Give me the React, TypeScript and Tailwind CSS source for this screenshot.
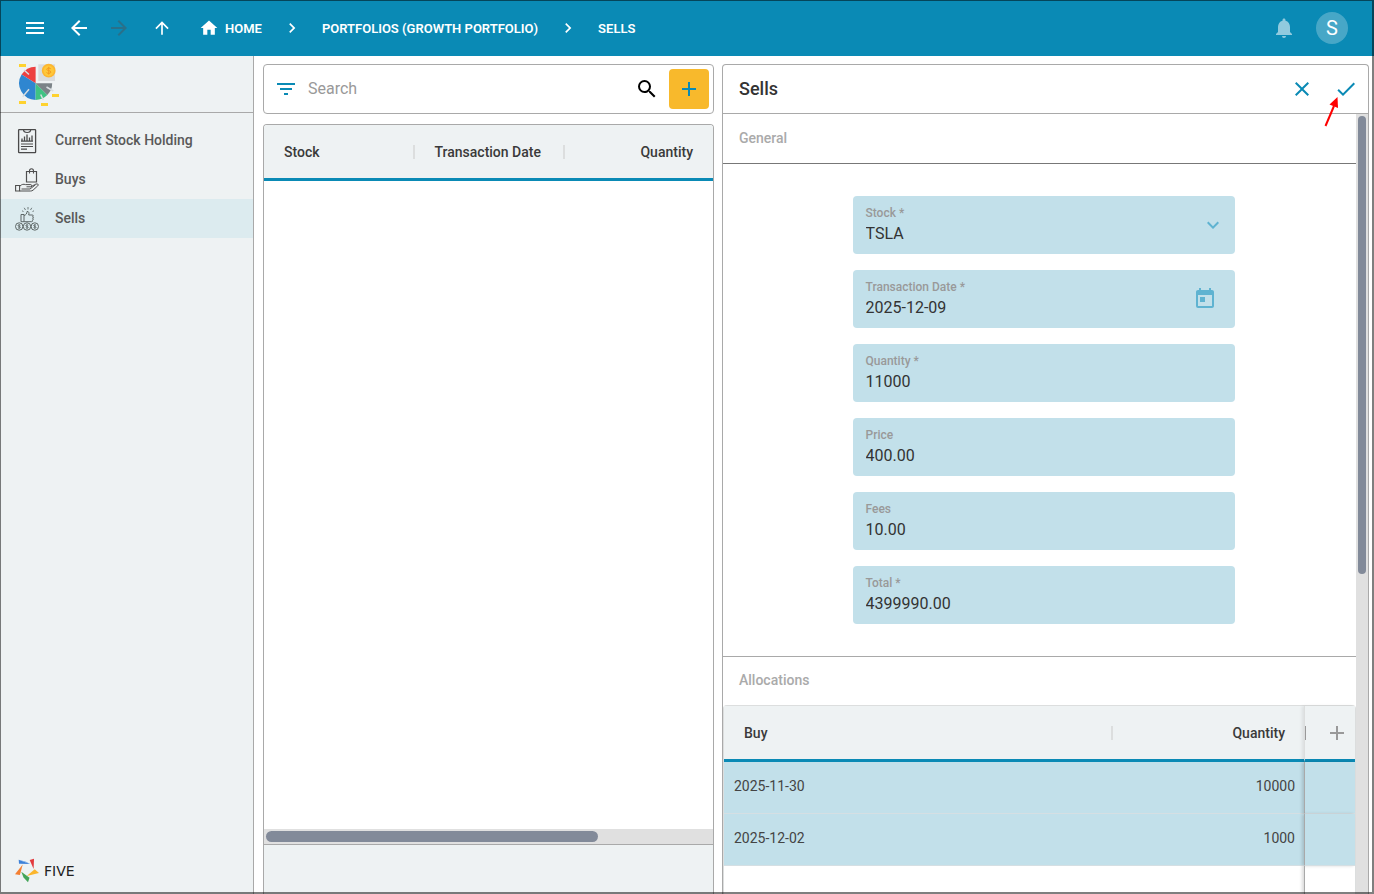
import type { ComponentType, ReactNode } from 'react';
import {
  MdAdd,
  MdArrowBack,
  MdArrowForward,
  MdArrowUpward,
  MdCheck,
  MdChevronRight,
  MdClose,
  MdExpandMore,
  MdFilterList,
  MdHome,
  MdMenu,
  MdNotifications,
  MdSearch,
  MdToday,
} from 'react-icons/md';

function PortfolioLogo() {
  return (
    <svg width="42" height="44" viewBox="0 0 42 44" aria-hidden="true">
      <path d="M20.3 1.3H37V18H20.3Z" fill="#d9dcde" />
      <path d="M17.6 20.3V3.7A16.6 16.6 0 0 0 3.6 11.6Z" fill="#ed4040" />
      <path d="M17.6 20.3L3.6 11.6A16.6 16.6 0 0 0 17.6 36.9Z" fill="#2f86d0" />
      <path d="M17.6 20.3V36.9A16.6 16.6 0 0 0 29.3 32Z" fill="#3fc383" />
      <path d="M17.6 20.3L29.3 32A16.6 16.6 0 0 0 34.2 20.3Z" fill="#7b8387" />
      <path
        d="M6 7L11 11.5M4.7 33.7L11 26.3M22.7 31.5L25.3 37M28.5 24L35.3 28"
        stroke="#d9dee1"
        strokeWidth="1.5"
        fill="none"
      />
      <path d="M1 1h7v3H1zM34 31h7v3h-7zM1 38h7v3H1zM23 40h7v3h-7z" fill="#fed22f" />
      <circle cx="30.7" cy="7.7" r="6.9" fill="#fdb62f" />
      <circle cx="30.7" cy="7.7" r="5.2" fill="#fec83a" />
      <path
        d="M32.8 5.8c-.5-.9-3.9-1.1-4.1.5-.1 1.7 4.3 1 4.2 2.8-.2 1.7-3.7 1.5-4.4.4M30.7 3.8v7.8"
        stroke="#f59a1f"
        strokeWidth="1"
        fill="none"
      />
    </svg>
  );
}

function HoldingIcon() {
  return (
    <svg width="24" height="26" viewBox="0 0 24 26" fill="none" stroke="#4a4a4a" aria-hidden="true">
      <rect x="3.6" y="1.6" width="17" height="23" rx=".6" strokeWidth="1.3" />
      <path d="M8.500 1.500c0 2.300 1.200 3 3.600 3s3.600-.7 3.600-3" strokeWidth="1.2" />
      <path d="M7 13V10.500M9.500 13V8.500M12 13V6.500M14.500 13V9.500M17 13V7.500" strokeWidth="1.3" />
      <path d="M6 13.200h12M6 16h12M6 18.500h12M6 21.200h6" strokeWidth="1.2" />
    </svg>
  );
}

function BuysIcon() {
  return (
    <svg width="24" height="26" viewBox="0 0 24 26" fill="none" stroke="#4f4f4f" aria-hidden="true">
      <path d="M11.5 4.5h10v10.5h-10z" strokeWidth="1.2" />
      <path d="M14.5 6.5V4c0-3 4-3 4 0v2.5" strokeWidth="1.1" />
      <path d="M.6 18.5h4v5.5h-4z" strokeWidth="1.1" />
      <path
        d="M4.6 19.3c2.5-2.3 4-2.3 5.8-1.7h5.5c1.3.2 1.1 2-.1 2.2h-4.3M15.8 19.8c2.5-1.3 4.8-3 6.2-2.9 1.5.2 1.6 1.200.7 2l-4.600 4.200c-.8.7-1.500.9-2.600.9H4.600M6.500 22h8.500l5.500-4.200"
        strokeWidth="1"
      />
    </svg>
  );
}

function SellsIcon() {
  return (
    <svg width="24" height="26" viewBox="0 0 24 26" fill="none" stroke="#56605f" aria-hidden="true">
      <path d="M10.500 4L9.200 1.800M13 3.500V1M15.500 4l1.300-2.200M8.500 5.500L7 4.800M17.500 5.500l1.500-.7" strokeWidth=".8" />
      <path d="M6 8.500h3v7.200H6zM9 9.500c2-.5 3-2 3-4 1.800-.5 2.300 1.500 1.700 3.500h3.500c1.500 0 1.300 1.700.3 1.800 1.300.2 1.200 1.800.1 1.900 1 .3.700 1.600-.3 1.700.7.500.3 1.300-.6 1.300H9" strokeWidth=".95" />
      <circle cx="4.2" cy="20.5" r="3.7" strokeWidth=".95" />
      <circle cx="12" cy="20.5" r="3.7" strokeWidth=".95" />
      <circle cx="19.8" cy="20.5" r="3.7" strokeWidth=".95" />
      <path
        d="M5.500 19.300c-.6-.8-2.500-.6-2.500.3 0 1 2.500.7 2.500 1.700s-2 1.100-2.600.2M4.200 18.200v4.600M13.300 19.300c-.6-.8-2.500-.6-2.500.3 0 1 2.500.7 2.500 1.700s-2 1.100-2.600.2M12 18.200v4.600M21.100 19.300c-.6-.8-2.500-.6-2.500.3 0 1 2.500.7 2.500 1.700s-2 1.100-2.600.2M19.800 18.200v4.600"
        strokeWidth=".8"
      />
    </svg>
  );
}

function FiveMark() {
  return (
    <svg width="25" height="25" viewBox="0 0 25 25" aria-hidden="true">
      <path d="M3.7 1.7L15 6L4 5.7Z" fill="#3f82d8" />
      <path d="M3.7 1.7L11 3.8L15 6Z" fill="#5c9be6" />
      <path d="M14.7 2L19 .7L18.6 11Z" fill="#e2393c" />
      <path d="M11.7 18L19.7 11.3L24 15Z" fill="#fbb62c" />
      <path d="M6.3 13.7L14.5 19.7L13 24.3L8.5 19.5Z" fill="#43a558" />
      <path d="M7.7 6.5L4.9 17L0 16.3Z" fill="#f47f31" />
    </svg>
  );
}

const navItems: { label: string; Icon: ComponentType; active?: boolean }[] = [
  { label: 'Current Stock Holding', Icon: HoldingIcon },
  { label: 'Buys', Icon: BuysIcon },
  { label: 'Sells', Icon: SellsIcon, active: true },
];

const allocations = [
  { buy: '2025-11-30', quantity: '10000' },
  { buy: '2025-12-02', quantity: '1000' },
];

function TopBar() {
  return (
    <header className="flex h-14 shrink-0 items-center justify-between bg-[#0a8ab5] pr-[26px] pl-[23px] text-white">
      <nav className="flex items-center text-[13px] font-semibold" aria-label="Breadcrumb">
        <button aria-label="Menu" className="mr-5"><MdMenu size={24} /></button>
        <button aria-label="Back" className="mr-4"><MdArrowBack size={24} /></button>
        <button aria-label="Forward" className="mr-[21px] text-[#29708a]" disabled><MdArrowForward size={24} /></button>
        <button aria-label="Up" className="mr-[27px]"><MdArrowUpward size={20} /></button>
        <a href="#home" className="flex items-center gap-[6px]"><MdHome size={20} /><span className="pt-[2px]">HOME</span></a>
        <MdChevronRight size={20} className="mx-5" />
        <a href="#portfolios" className="pt-[2px]">PORTFOLIOS (GROWTH PORTFOLIO)</a>
        <MdChevronRight size={20} className="mx-5" />
        <a href="#sells" className="pt-[2px]">SELLS</a>
      </nav>
      <div className="flex items-center gap-5">
        <button aria-label="Notifications" className="text-white/55"><MdNotifications size={24} /></button>
        <button aria-label="Account" className="flex size-8 items-center justify-center rounded-full bg-white/25 text-xl">S</button>
      </div>
    </header>
  );
}

function Sidebar() {
  return (
    <aside className="flex w-[254px] shrink-0 flex-col border-r border-[#a9a9a9] bg-[#eef2f3]">
      <div className="h-[57px] border-b border-[#a9a9a9] pt-[7px] pl-[18px]">
        <PortfolioLogo />
      </div>
      <nav className="flex-1 pt-2" aria-label="Sections">
        {navItems.map(({ label, Icon, active }) => (
          <a
            key={label}
            href="#section"
            className={`flex h-[39px] items-center gap-4 pl-[15px] text-sm font-medium text-[#595959] ${active ? 'bg-[#dcebef]' : ''}`}
          >
            <Icon />
            <span className="pb-[2px]">{label}</span>
          </a>
        ))}
      </nav>
      <div className="flex items-center gap-1 pb-[11px] pl-[15px] text-[#222]">
        <FiveMark />
        <span className="font-['DejaVu_Sans',sans-serif] text-sm leading-6">FIVE</span>
      </div>
    </aside>
  );
}

function Divider() {
  return <span className="h-[14px] w-[2px] shrink-0 bg-[#dcdede]" />;
}

function SellsList() {
  return (
    <section className="flex min-h-0 min-w-0 flex-col gap-[10px]">
      <div className="flex h-[50px] shrink-0 items-center rounded border border-[#a9a9a9] pr-1 pl-[10px]">
        <button aria-label="Filter" className="text-[#0a8ab5]"><MdFilterList size={24} /></button>
        <input
          aria-label="Search"
          placeholder="Search"
          className="ml-[10px] min-w-0 flex-1 text-base outline-none placeholder:text-[#999]"
        />
        <button aria-label="Run search" className="mr-[10px] text-black"><MdSearch size={24} /></button>
        <button aria-label="Add sell" className="flex size-10 items-center justify-center rounded bg-[#f8b92c] text-[#0a8ab5]">
          <MdAdd size={24} />
        </button>
      </div>
      <div className="flex min-h-0 flex-1 flex-col overflow-hidden rounded-t border border-b-0 border-[#a9a9a9]">
        <table className="w-full table-fixed border-separate border-spacing-0 text-sm font-medium text-[#3a3a3a]">
          <thead>
            <tr className="h-14 bg-[#eef2f3]">
              <th className="border-b-3 border-[#0a8ab5] p-0 pl-5 font-medium">
                <span className="flex items-center justify-between">Stock<Divider /></span>
              </th>
              <th className="border-b-3 border-[#0a8ab5] p-0 pl-5 font-medium">
                <span className="flex items-center justify-between">Transaction Date<Divider /></span>
              </th>
              <th className="w-[148px] border-b-3 border-[#0a8ab5] p-0 pr-5 text-right font-medium">Quantity</th>
            </tr>
          </thead>
        </table>
        <div className="flex-1" />
        <div className="h-[15px] bg-[#e0e0e0] p-[2px]">
          <div className="h-[11px] w-[74.5%] rounded-full bg-[#828a99]" />
        </div>
        <div className="h-[50px] border-t border-[#a9a9a9] bg-[#eef2f3]" />
      </div>
    </section>
  );
}

const fieldInput = 'block h-6 w-full appearance-none bg-transparent p-0 text-base leading-6 text-[#333] outline-none';

function Field({ id, label, children, icon }: { id: string; label: string; children: ReactNode; icon?: ReactNode }) {
  return (
    <div className="flex h-[58px] items-center rounded bg-[#c2e0ea] px-[13px]">
      <div className="min-w-0 flex-1">
        <label htmlFor={id} className="block text-xs leading-[18px] font-medium text-[#999]">{label}</label>
        {children}
      </div>
      {icon}
    </div>
  );
}

function TextField({ id, label, value, icon }: { id: string; label: string; value: string; icon?: ReactNode }) {
  return (
    <Field id={id} label={label} icon={icon}>
      <input id={id} defaultValue={value} className={fieldInput} />
    </Field>
  );
}

function AllocationsTable() {
  return (
    <div className="flex min-h-0 flex-1 flex-col rounded-t border border-b-0 border-[#dcdede]">
      <table className="w-full table-fixed border-separate border-spacing-0 text-sm text-[#444]">
        <thead className="text-[#3a3a3a]">
          <tr className="h-14 bg-[#eef2f3]">
            <th className="border-b-3 border-[#0a8ab5] p-0 pl-5 font-medium">
              <span className="flex items-center justify-between">Buy<Divider /></span>
            </th>
            <th className="w-[191px] border-b-3 border-[#0a8ab5] p-0 pr-[19px] text-right font-medium">Quantity</th>
            <th className="w-[51px] border-b-3 border-l border-l-[#dcdede] border-b-[#0a8ab5] p-0 shadow-[-2px_0_3px_rgba(0,0,0,0.08)]">
              <span className="flex items-center">
                <span className="h-[14px] w-px bg-[#999]" />
                <button aria-label="Add allocation" className="ml-[19px] text-[#999]"><MdAdd size={24} /></button>
              </span>
            </th>
          </tr>
        </thead>
        <tbody>
          {allocations.map((row) => (
            <tr key={row.buy} className="h-[52px] bg-[#c2e0ea]">
              <td className="border-b border-[#d5dfe3] p-0 pb-[3px] pl-[10px]">{row.buy}</td>
              <td className="border-b border-[#d5dfe3] p-0 pr-[9px] pb-[3px] text-right">{row.quantity}</td>
              <td className="border-b border-l border-b-[#d5dfe3] border-l-[#a9a9a9] shadow-[-2px_0_3px_rgba(0,0,0,0.15)]" />
            </tr>
          ))}
        </tbody>
      </table>
      <div className="flex flex-1 justify-end overflow-hidden">
        <div className="w-[51px] border-l border-[#a9a9a9] shadow-[-2px_0_3px_rgba(0,0,0,0.15)]" />
      </div>
    </div>
  );
}

function SellForm() {
  return (
    <section className="flex min-h-0 min-w-0 flex-col rounded-t border border-b-0 border-[#a9a9a9]">
      <div className="flex h-[49px] shrink-0 items-center border-b border-[#a9a9a9] pr-[10px] pl-4">
        <h1 className="flex-1 text-lg font-medium text-[#333]">Sells</h1>
        <div className="flex gap-5 text-[#0a8ab5]">
          <button aria-label="Cancel"><MdClose size={24} /></button>
          <button aria-label="Save" className="relative">
            <MdCheck size={24} />
            <svg className="absolute top-5 -left-[10px]" width="16" height="30" viewBox="0 0 16 30" aria-hidden="true">
              <path d="M1.500 29L10 9" stroke="#fe0000" strokeWidth="2" />
              <path d="M13.500 0L14 11L5.500 7.500Z" fill="#fe0000" />
            </svg>
          </button>
        </div>
      </div>
      <div className="flex min-h-0 flex-1">
        <div className="flex min-w-0 flex-1 flex-col overflow-hidden">
          <h2 className="flex h-[50px] shrink-0 items-center border-b border-[#777] pb-[2px] pl-4 text-sm font-medium text-[#aaa]">General</h2>
          <form className="flex shrink-0 justify-center border-b border-[#a9a9a9] py-8 pl-2">
            <div className="flex w-[382px] flex-col gap-4">
              <Field
                id="stock"
                label="Stock *"
                icon={<MdExpandMore size={24} className="pointer-events-none mr-[-3px] -ml-6 text-[#5fb3d1]" />}
              >
                <select id="stock" className={fieldInput} defaultValue="TSLA">
                  <option>TSLA</option>
                </select>
              </Field>
              <TextField
                id="date"
                label="Transaction Date *"
                value="2025-12-09"
                icon={<button type="button" aria-label="Pick date" className="mr-[5px] text-[#5fb3d1]"><MdToday size={24} /></button>}
              />
              <TextField id="quantity" label="Quantity *" value="11000" />
              <TextField id="price" label="Price" value="400.00" />
              <TextField id="fees" label="Fees" value="10.00" />
              <TextField id="total" label="Total *" value="4399990.00" />
            </div>
          </form>
          <h2 className="flex h-12 shrink-0 items-center pb-[2px] pl-4 text-sm font-medium text-[#aaa]">Allocations</h2>
          <AllocationsTable />
        </div>
        <div className="w-3 shrink-0 bg-[#e0e0e0] p-[2px]">
          <div className="h-[59%] rounded-full bg-[#828a99]" />
        </div>
      </div>
    </section>
  );
}

export default function App() {
  return (
    <div className="relative flex h-screen flex-col overflow-hidden bg-white font-[Roboto,sans-serif]">
      <TopBar />
      <div className="flex min-h-0 flex-1">
        <Sidebar />
        <main className="grid min-w-0 flex-1 grid-cols-[451fr_647fr] gap-2 pt-2 pr-[5px] pl-[9px]">
          <SellsList />
          <SellForm />
        </main>
      </div>
      <div className="pointer-events-none absolute inset-0 border-t border-r-2 border-b-2 border-l border-black/50" />
    </div>
  );
}
